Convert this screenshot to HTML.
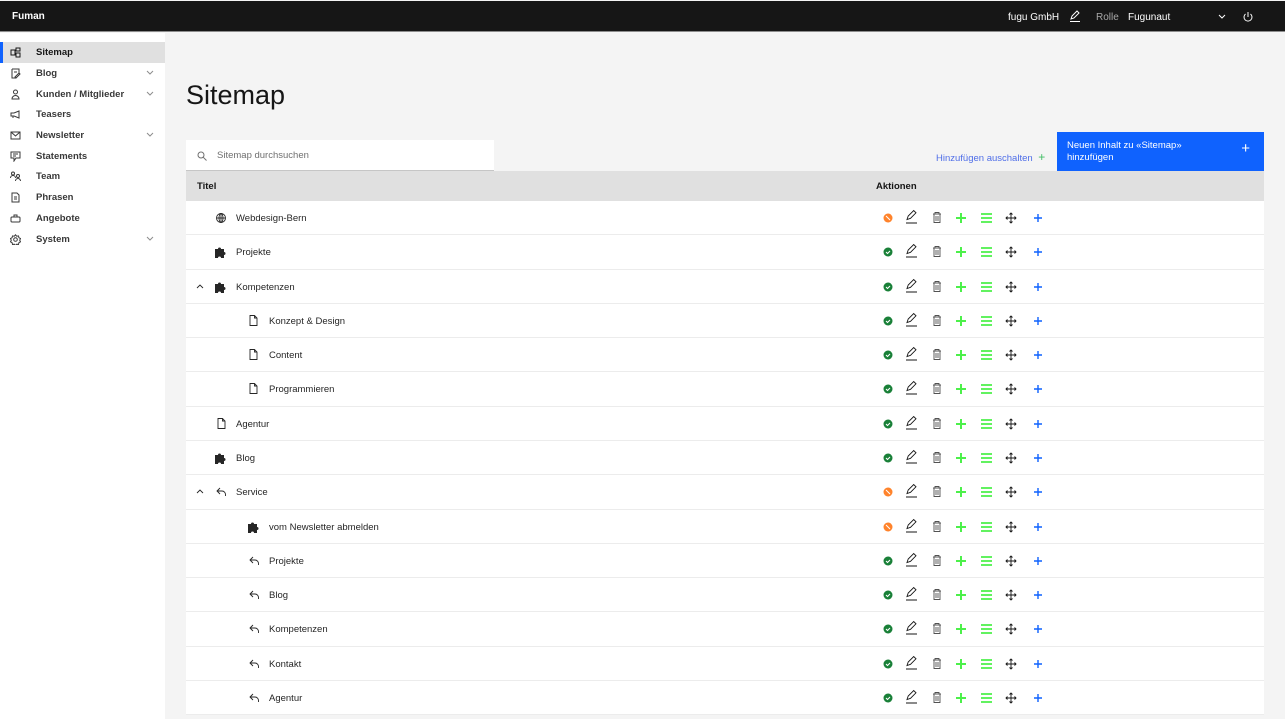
<!DOCTYPE html>
<html><head><meta charset="utf-8"><style>
*{box-sizing:border-box;margin:0;padding:0}
body{width:1285px;height:719px;overflow:hidden;background:#f4f4f4;font-family:"Liberation Sans",sans-serif;color:#161616;position:relative}
.top{position:absolute;left:0;top:1px;width:1285px;height:31px;background:#161616;border-bottom:1px solid #8d8d8d}
.top .logo{position:absolute;left:12px;top:10px;color:#fff;font-weight:bold;font-size:10px}
.top span{position:absolute;top:11px;font-size:10px;color:#fff}
.side{position:absolute;left:0;top:33px;width:165px;height:686px;background:#fff}
.si{position:absolute;left:0;width:165px;height:21px;font-size:9.5px;font-weight:bold;color:#393939}
.si .t{position:absolute;left:36px;top:5px}
.si svg{position:absolute;left:10px;top:5px}
.si .ch{position:absolute;left:146px;top:7px}
.si.act{background:#e0e0e0;border-left:3px solid #0f62fe}
.si.act svg{left:7px}.si.act .t{left:33px;color:#161616}
h1{position:absolute;left:186px;top:80px;font-size:27px;font-weight:normal;color:#161616}
.search{position:absolute;left:186px;top:140px;width:308px;height:31px;background:#fff;border-bottom:1px solid #c6c6c6}
.search span{position:absolute;left:31px;top:10px;font-size:9.5px;color:#6f6f6f}
.add{position:absolute;left:936px;top:150px;font-size:9.5px;color:#4f6ee8}
.btn{position:absolute;left:1057px;top:132px;width:207px;height:39px;background:#0f62fe;color:#fff;font-size:9.5px;line-height:12px;padding:8px 10px}
.thead{position:absolute;left:186px;top:171px;width:1078px;height:30px;background:#e0e0e0;font-size:9.5px;font-weight:bold}
.tb{position:absolute;left:186px;top:201px;width:1078px;background:#fff}
.r{position:relative;height:34.29px;border-bottom:1px solid #ececec;font-size:9.5px;color:#262626}
.r .tx{position:absolute;top:12px}
.a{position:absolute;left:0;top:0;overflow:visible}
</style></head><body>
<div class="top"><div class="logo">Fuman</div>
<span style="left:1008px">fugu GmbH</span>
<svg style="position:absolute;left:1069px;top:9px" width="12" height="12" viewBox="0 0 12 12" fill="none" stroke="#fff" stroke-width="1"><path d="M2 9l1-3 5-5 2 2-5 5z M1 11.5h10"/></svg>
<span style="left:1096px;color:#a8a8a8">Rolle</span>
<span style="left:1128px">Fugunaut</span>
<svg style="position:absolute;left:1218px;top:13px" width="8" height="5" viewBox="0 0 8 5" fill="none" stroke="#fff"><path d="M1 1l3 3 3-3"/></svg>
<svg style="position:absolute;left:1242px;top:10px" width="12" height="12" viewBox="0 0 12 12" fill="none" stroke="#fff"><path d="M6 1v5M3.5 3a4 4 0 1 0 5 0"/></svg>
</div>
<div class="side">
<div class="si act" style="top:9px"><svg width="11" height="11" viewBox="0 0 11 11" fill="none" stroke="#161616"><rect x="1" y="3" width="4" height="5"/><rect x="6" y="1" width="4" height="3"/><rect x="6" y="6" width="4" height="4"/></svg><span class="t">Sitemap</span></div>
<div class="si" style="top:30px"><svg width="11" height="11" viewBox="0 0 11 11" fill="none" stroke="#393939"><path d="M2 1h7v4M2 1v9h4M4 4h3M5 9l4-4 1 1-4 4z"/></svg><span class="t">Blog</span><svg class="ch" width="8" height="5" viewBox="0 0 8 5" fill="none" stroke="#8d8d8d"><path d="M1 1l3 3 3-3"/></svg></div>
<div class="si" style="top:51px"><svg width="11" height="11" viewBox="0 0 11 11" fill="none" stroke="#393939"><circle cx="5.5" cy="3" r="2"/><path d="M2 10a3.5 3.5 0 0 1 7 0z"/></svg><span class="t">Kunden / Mitglieder</span><svg class="ch" width="8" height="5" viewBox="0 0 8 5" fill="none" stroke="#8d8d8d"><path d="M1 1l3 3 3-3"/></svg></div>
<div class="si" style="top:71px"><svg width="11" height="11" viewBox="0 0 11 11" fill="none" stroke="#393939"><path d="M1 4h3l5-2v7L4 7H1zM3 7v2"/></svg><span class="t">Teasers</span></div>
<div class="si" style="top:92px"><svg width="11" height="11" viewBox="0 0 11 11" fill="none" stroke="#393939"><rect x="1" y="2" width="9" height="7"/><path d="M1 2l4.5 4L10 2"/></svg><span class="t">Newsletter</span><svg class="ch" width="8" height="5" viewBox="0 0 8 5" fill="none" stroke="#8d8d8d"><path d="M1 1l3 3 3-3"/></svg></div>
<div class="si" style="top:113px"><svg width="11" height="11" viewBox="0 0 11 11" fill="none" stroke="#393939"><path d="M1 1h9v6H6l-2 3V7H1zM3 3h5M3 5h3"/></svg><span class="t">Statements</span></div>
<div class="si" style="top:133px"><svg width="11" height="11" viewBox="0 0 11 11" fill="none" stroke="#393939"><circle cx="3" cy="2.5" r="1.5"/><circle cx="8" cy="5" r="1.5"/><path d="M0.5 7a2.5 2.5 0 0 1 5 0M5.5 10a2.5 2.5 0 0 1 5 0"/></svg><span class="t">Team</span></div>
<div class="si" style="top:154px"><svg width="11" height="11" viewBox="0 0 11 11" fill="none" stroke="#393939"><path d="M2 1h5l2 2v7H2zM4 5h3M4 7h3"/></svg><span class="t">Phrasen</span></div>
<div class="si" style="top:175px"><svg width="11" height="11" viewBox="0 0 11 11" fill="none" stroke="#393939"><rect x="1" y="4" width="9" height="5" rx="1"/><path d="M4 4V2h3v2"/></svg><span class="t">Angebote</span></div>
<div class="si" style="top:196px"><svg width="11" height="11" viewBox="0 0 11 11" fill="none" stroke="#393939"><circle cx="5.5" cy="5.5" r="1.8"/><path d="M5.5 0.8l1.2 1.4 1.8-.3.4 1.8 1.6.9-.8 1.6.8 1.6-1.6.9-.4 1.8-1.8-.3-1.2 1.4-1.2-1.4-1.8.3-.4-1.8-1.6-.9.8-1.6-.8-1.6 1.6-.9.4-1.8 1.8.3z"/></svg><span class="t">System</span><svg class="ch" width="8" height="5" viewBox="0 0 8 5" fill="none" stroke="#8d8d8d"><path d="M1 1l3 3 3-3"/></svg></div>
</div>
<h1>Sitemap</h1>
<div class="search"><svg style="position:absolute;left:11px;top:11px" width="10" height="10" viewBox="0 0 10 10" fill="none" stroke="#6f6f6f"><circle cx="4" cy="4" r="3"/><path d="M6.3 6.3L9.5 9.5"/></svg><span>Sitemap durchsuchen</span></div>
<div class="add">Hinzufügen auschalten <span style="color:#42be65;font-size:12px;margin-left:3px">+</span></div>
<div class="btn">Neuen Inhalt zu «Sitemap»<br>hinzufügen<span style="position:absolute;right:14px;top:11px;font-size:15px">+</span></div>
<div class="thead"><span style="position:absolute;left:11px;top:10px">Titel</span><span style="position:absolute;left:690px;top:10px">Aktionen</span></div>
<svg width="0" height="0" style="position:absolute"><defs>
<g id="acts">
<path d="M721 11.5l1.2-3.5 5.5-5.5 2.3 2.3-5.5 5.5z M720 15h11" fill="none" stroke="#161616" stroke-width="0.9"/>
<path d="M747 6h8M749 6V4.5h4V6M748 6.5v8h6v-8M750 8v5M752 8v5" fill="none" stroke="#525252" stroke-width="0.9"/>
<path d="M770 10h10M775 5v10" stroke="#4cf04a" stroke-width="2"/>
<path d="M795 6h11M795 10h11M795 14h11" stroke="#4cf04a" stroke-width="1.8"/>
<path d="M825 5v10M820 10h10M823.5 6.5L825 5l1.5 1.5M823.5 13.5L825 15l1.5-1.5M821.5 8.5L820 10l1.5 1.5M828.5 8.5L830 10l-1.5 1.5" fill="none" stroke="#161616" stroke-width="0.9"/>
<path d="M848 10h8M852 6v8" stroke="#0f62fe" stroke-width="1.4"/>
</g>
<g id="ok"><circle cx="702" cy="10" r="4.5" fill="#198038"/><path d="M700 10l1.5 1.5 2.5-2.5" fill="none" stroke="#fff" stroke-width="1"/></g>
<g id="no"><circle cx="702" cy="10" r="4.5" fill="#ff832b"/><path d="M700 8l4 4" stroke="#fff" stroke-width="1"/></g>
<path id="pz" d="M0 3h3a1.5 1.5 0 1 1 3 0h3v3a1.5 1.5 0 1 1 0 3v3H6a1.5 1.5 0 1 0-3 0H0z" fill="#262626"/>
<path id="doc" d="M1 .5h4.5L8 3v7.5H1z M5.5.5V3H8" fill="none" stroke="#262626" stroke-width="0.9"/>
<path id="rep" d="M4 1L1 4l3 3M1 4h5a3.5 3.5 0 0 1 3.5 3.5V9" fill="none" stroke="#262626" stroke-width="0.9"/>
<path id="car" d="M1 5l3-3 3 3" fill="none" stroke="#262626" stroke-width="0.9"/>
</defs></svg>
<div class="tb">
<div class="r"><svg class="a" width="1078" height="34"><g transform="translate(0,7)"><use href="#no"/><use href="#acts"/></g><g transform="translate(30,12)" fill="none" stroke="#262626" stroke-width="0.9"><circle cx="5" cy="5" r="4.5"/><path d="M.5 5h9M5 .5v9"/><ellipse cx="5" cy="5" rx="2" ry="4.5"/></g></svg><span class="tx" style="left:50px">Webdesign-Bern</span></div>
<div class="r"><svg class="a" width="1078" height="34"><g transform="translate(0,7)"><use href="#ok"/><use href="#acts"/></g><use href="#pz" transform="translate(29,11)"/></svg><span class="tx" style="left:50px">Projekte</span></div>
<div class="r"><svg class="a" width="1078" height="34"><g transform="translate(0,7)"><use href="#ok"/><use href="#acts"/></g><use href="#car" transform="translate(10,13)"/><use href="#pz" transform="translate(29,11)"/></svg><span class="tx" style="left:50px">Kompetenzen</span></div>
<div class="r"><svg class="a" width="1078" height="34"><g transform="translate(0,7)"><use href="#ok"/><use href="#acts"/></g><use href="#doc" transform="translate(63,11)"/></svg><span class="tx" style="left:83px">Konzept &amp; Design</span></div>
<div class="r"><svg class="a" width="1078" height="34"><g transform="translate(0,7)"><use href="#ok"/><use href="#acts"/></g><use href="#doc" transform="translate(63,11)"/></svg><span class="tx" style="left:83px">Content</span></div>
<div class="r"><svg class="a" width="1078" height="34"><g transform="translate(0,7)"><use href="#ok"/><use href="#acts"/></g><use href="#doc" transform="translate(63,11)"/></svg><span class="tx" style="left:83px">Programmieren</span></div>
<div class="r"><svg class="a" width="1078" height="34"><g transform="translate(0,7)"><use href="#ok"/><use href="#acts"/></g><use href="#doc" transform="translate(31,11)"/></svg><span class="tx" style="left:50px">Agentur</span></div>
<div class="r"><svg class="a" width="1078" height="34"><g transform="translate(0,7)"><use href="#ok"/><use href="#acts"/></g><use href="#pz" transform="translate(29,11)"/></svg><span class="tx" style="left:50px">Blog</span></div>
<div class="r"><svg class="a" width="1078" height="34"><g transform="translate(0,7)"><use href="#no"/><use href="#acts"/></g><use href="#car" transform="translate(10,13)"/><use href="#rep" transform="translate(30,12)"/></svg><span class="tx" style="left:50px">Service</span></div>
<div class="r"><svg class="a" width="1078" height="34"><g transform="translate(0,7)"><use href="#no"/><use href="#acts"/></g><use href="#pz" transform="translate(62,11)"/></svg><span class="tx" style="left:83px">vom Newsletter abmelden</span></div>
<div class="r"><svg class="a" width="1078" height="34"><g transform="translate(0,7)"><use href="#ok"/><use href="#acts"/></g><use href="#rep" transform="translate(63,12)"/></svg><span class="tx" style="left:83px">Projekte</span></div>
<div class="r"><svg class="a" width="1078" height="34"><g transform="translate(0,7)"><use href="#ok"/><use href="#acts"/></g><use href="#rep" transform="translate(63,12)"/></svg><span class="tx" style="left:83px">Blog</span></div>
<div class="r"><svg class="a" width="1078" height="34"><g transform="translate(0,7)"><use href="#ok"/><use href="#acts"/></g><use href="#rep" transform="translate(63,12)"/></svg><span class="tx" style="left:83px">Kompetenzen</span></div>
<div class="r"><svg class="a" width="1078" height="34"><g transform="translate(0,7)"><use href="#ok"/><use href="#acts"/></g><use href="#rep" transform="translate(63,12)"/></svg><span class="tx" style="left:83px">Kontakt</span></div>
<div class="r"><svg class="a" width="1078" height="34"><g transform="translate(0,7)"><use href="#ok"/><use href="#acts"/></g><use href="#rep" transform="translate(63,12)"/></svg><span class="tx" style="left:83px">Agentur</span></div>
</div>
</body></html>
